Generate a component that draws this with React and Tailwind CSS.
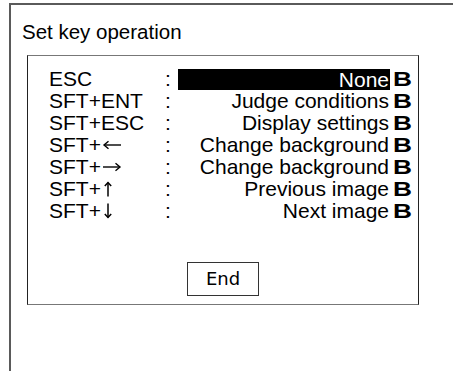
import React from "react";

const Arrow = ({ dir }) => {
  if (dir === "left" || dir === "right") {
    const flip = dir === "right";
    return (
      <svg width="20" height="12" viewBox="0 0 20 12" className="inline-block align-[1px] ml-[1px]">
        <g transform={flip ? "translate(20 0) scale(-1 1)" : undefined} stroke="black" strokeWidth="1.4" fill="none">
          <path d="M2 6 H19" />
          <path d="M6.5 2.2 L2 6 L6.5 9.8" />
        </g>
      </svg>
    );
  }
  const flip = dir === "down";
  return (
    <svg width="10" height="16" viewBox="0 0 10 16" className="inline-block align-[-1px] ml-[2px]">
      <g transform={flip ? "translate(0 16) scale(1 -1)" : undefined} stroke="black" strokeWidth="1.5" fill="none">
        <path d="M5 1.5 V15.5" />
        <path d="M1.8 5 L5 1.5 L8.2 5" />
      </g>
    </svg>
  );
};

const rows = [
  { key: "ESC", value: "None", active: true },
  { key: "SFT+ENT", value: "Judge conditions" },
  { key: "SFT+ESC", value: "Display settings" },
  { key: "SFT+", arrow: "left", value: "Change background" },
  { key: "SFT+", arrow: "right", value: "Change background" },
  { key: "SFT+", arrow: "up", value: "Previous image" },
  { key: "SFT+", arrow: "down", value: "Next image" },
];

const App = () => {
  return (
    <div
      className="w-[453px] h-[371px] overflow-hidden bg-white text-black"
      style={{ fontFamily: '"Liberation Sans", Arial, sans-serif' }}
    >
      <div className="ml-[9px] mt-[3px] h-[400px] border-t-2 border-l-2 border-[#5a5a5a] pl-[11px]">
        <h1 className="pt-[15px] text-[20.5px] leading-[24px] font-normal">
          Set key operation
        </h1>

        <div className="mt-[11px] ml-[5px] w-[392px] h-[250px] border border-[#222] border-t-[#777] border-b-[#777] flex flex-col">
          <div className="pt-[12px] pl-[21px] pr-[6px]">
            {rows.map((row, i) => (
              <div key={i} className="flex items-center h-[22px] text-[21px] leading-[22px]">
                <span className="w-[116px] whitespace-nowrap">
                  {row.key}
                  {row.arrow && <Arrow dir={row.arrow} />}
                </span>
                <span className="w-[13px]">:</span>
                <span
                  className={
                    row.active
                      ? "flex-1 text-right bg-black text-white pr-[1px] h-[21px]"
                      : "flex-1 text-right pr-[1px]"
                  }
                >
                  {row.value}
                </span>
                <span className="ml-[3px] w-[19px]">
                  <span className="inline-block font-bold scale-x-125 origin-left">B</span>
                </span>
              </div>
            ))}
          </div>

          <div className="flex justify-center mt-[40px]">
            <button
              className="w-[72px] h-[34px] border border-[#333] bg-white text-[18px] leading-none"
              style={{ fontFamily: '"DejaVu Sans", sans-serif' }}
            >
              End
            </button>
          </div>
        </div>
      </div>
    </div>
  );
};

export default App;
